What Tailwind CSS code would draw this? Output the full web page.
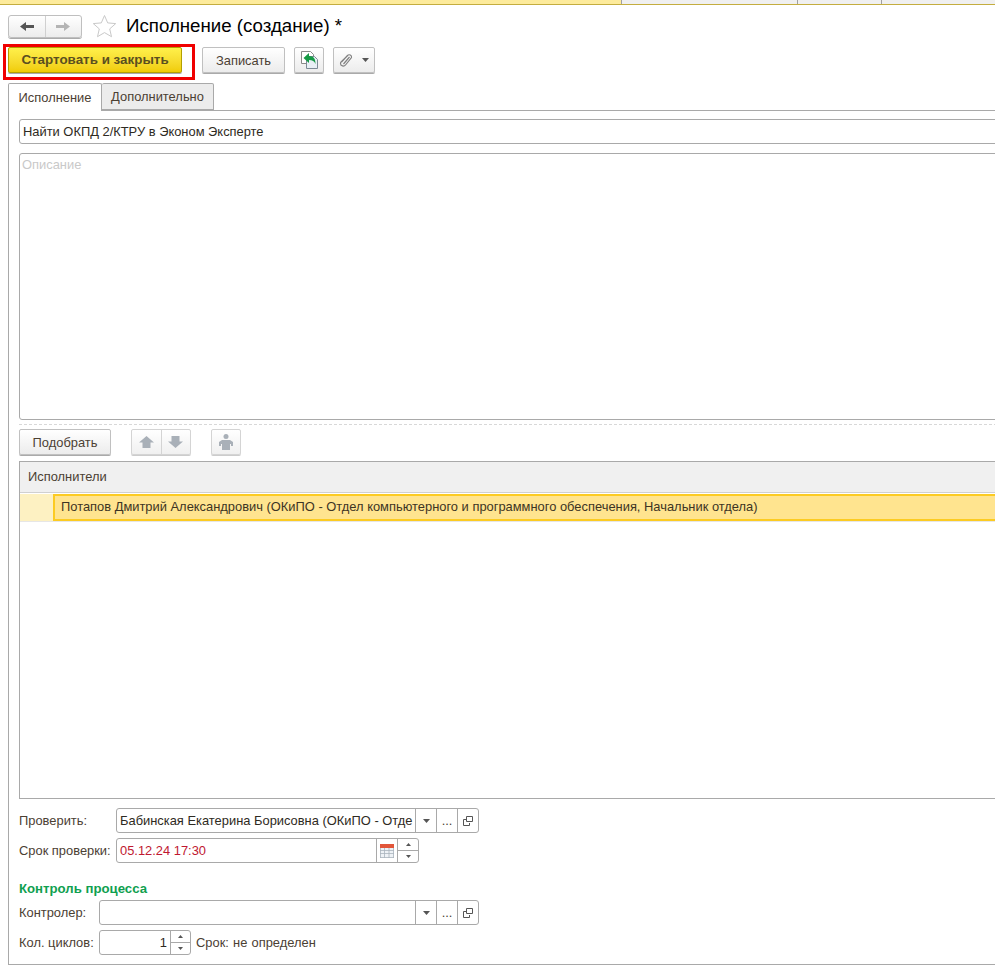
<!DOCTYPE html>
<html lang="ru">
<head>
  <meta charset="UTF-8" />
  <meta name="viewport" content="width=device-width, initial-scale=1" />
  <title>Исполнение (создание)</title>
  <script src="https://cdn.jsdelivr.net/npm/@tailwindcss/browser@4"></script>
</head>
<body class="bg-white font-['Liberation_Sans',Arial,sans-serif] text-[12.9px] text-[#4b4033]">
<div class="relative w-[995px] h-[970px] overflow-hidden">

  <!-- Top tabs strip -->
  <div class="flex h-[5px] border-b border-[#c4ad3f] bg-[#f0f0f0]">
    <div class="w-[622px] bg-[#fdeb9c] border-r border-[#a0a0a0]"></div>
    <div class="w-[176px] border-r border-[#a0a0a0]"></div>
    <div class="w-[84px] border-r border-[#a0a0a0]"></div>
  </div>

  <!-- Header -->
  <div class="flex items-center h-[24px] mt-[9px] ml-[8px]">
    <div class="flex w-[74px] h-[23px] border border-[#bfbfbf] rounded-[3px] bg-gradient-to-b from-white to-[#ececec] shadow-[0_1px_0_#aaa]">
      <div class="flex-1 flex items-center justify-center border-r border-[#d0d0d0]">
        <svg width="14" height="11" viewBox="0 0 14 11"><path d="M0 5.500 6 1v3h8v3H6v3z" fill="#555"/></svg>
      </div>
      <div class="flex-1 flex items-center justify-center">
        <svg width="14" height="11" viewBox="0 0 14 11"><path d="M14 5.500 8 1v3H0v3h8v3z" fill="#b4b4b4"/></svg>
      </div>
    </div>
    <svg class="ml-[10px]" width="25" height="24" viewBox="0 0 25 24"><path d="M12.500 1.500l3.200 7.400 8 .7-6 5.300 1.800 7.800-7-4.100-7 4.100 1.800-7.800-6-5.300 8-.7z" fill="#fff" stroke="#c9c9c9"/></svg>
    <h1 class="ml-[9px] text-[18.7px] leading-[24px] text-black">Исполнение (создание) *</h1>
  </div>

  <!-- Command bar -->
  <div class="flex items-start mt-[9px] ml-[8px] h-[26px]">
    <button class="w-[174px] h-[26px] pt-px rounded-[2px] border border-[#b3a000] bg-gradient-to-b from-[#fff04a] to-[#f0cc00] font-bold text-[13.4px] text-[#5a4f20] shadow-[0_1px_0_#aaa]">Стартовать и закрыть</button>
    <button class="ml-[20px] w-[83px] h-[26px] pt-px rounded-[2px] border border-[#c0c0c0] bg-gradient-to-b from-white to-[#ececec] text-[#4b4033] shadow-[0_1px_0_#aaa]">Записать</button>
    <button class="ml-[9px] w-[30px] h-[26px] rounded-[2px] border border-[#c0c0c0] bg-gradient-to-b from-white to-[#ececec] shadow-[0_1px_0_#aaa] flex items-center justify-center">
      <svg width="17" height="18" viewBox="0 0 17 18"><path d="M.5.500h9l3 3v9H.5z" fill="#fff" stroke="#8a8a8a"/><path d="M5.500 5.500h8l3 3v9h-11z" fill="#e8eff5" stroke="#7d8a96"/><path d="M2.500 7 8 2v3c5 0 6.500 3 6.500 8-1-2.500-3-4-6.500-4v3z" fill="#169a45"/></svg>
    </button>
    <button class="ml-[9px] w-[42px] h-[26px] rounded-[2px] border border-[#c0c0c0] bg-gradient-to-b from-white to-[#ececec] shadow-[0_1px_0_#aaa] flex items-center justify-center gap-[8px]">
      <svg width="15" height="15" viewBox="0 0 15 15" fill="none" stroke="#808080" stroke-width="1.200"><path d="M2.500 9 8.500 2.500c1.500-1.600 4.500-.3 4 2L6.500 12c-1.500 1.800-5 1.200-5-1.500 0-.7.300-1.200.8-1.800L8.500 2.800"/><path d="M4.500 11 10.500 4"/></svg>
      <svg width="7" height="4" viewBox="0 0 7 4"><path d="M0 0h7L3.500 4z" fill="#555"/></svg>
    </button>
  </div>

  <!-- Form tabs -->
  <div class="flex mt-[10px] ml-[8px] h-[27px] relative z-10">
    <div class="w-[94px] h-[28px] pt-px border border-b-0 border-[#a9a9a9] rounded-t-[2px] bg-white flex items-center justify-center">Исполнение</div>
    <div class="w-[112px] h-[27px] pt-px border border-l-0 border-[#a9a9a9] rounded-t-[2px] bg-[#ececec] flex items-center justify-center">Дополнительно</div>
  </div>

  <!-- Tab panel -->
  <div class="ml-[8px] w-[1100px] h-[855px] border border-[#a9a9a9] pt-[8px] pl-[10px]">
    <div class="w-[1000px] h-[25px] border border-[#a9a9a9] rounded-[3px] pl-[3px] leading-[23px] text-[#2e2a22]">Найти ОКПД 2/КТРУ в Эконом Эксперте</div>
    <div class="w-[1000px] h-[267px] mt-[9px] border border-[#a9a9a9] rounded-[3px] pl-[2px] pt-px text-[#c9c9c9]">Описание</div>

    <div class="mt-[4px] border-t border-dashed border-[#d8d8d8]"></div>

    <!-- Table toolbar -->
    <div class="flex items-start mt-[4px] h-[26px]">
      <button class="w-[92px] h-[26px] pt-px rounded-[2px] border border-[#c0c0c0] bg-gradient-to-b from-white to-[#ececec] shadow-[0_1px_0_#aaa]">Подобрать</button>
      <div class="flex ml-[20px] w-[60px] h-[26px] rounded-[2px] border border-[#d4d4d4] bg-gradient-to-b from-white to-[#f0f0f0] shadow-[0_1px_0_#ccc]">
        <div class="flex-1 flex items-center justify-center border-r border-[#d4d4d4]">
          <svg width="15" height="12" viewBox="0 0 15 12"><path d="M7.500 0 15 6.500h-3.500V12h-8V6.500H0z" fill="#a9b0b8"/></svg>
        </div>
        <div class="flex-1 flex items-center justify-center">
          <svg width="15" height="12" viewBox="0 0 15 12"><path d="M7.500 12 15 5.500h-3.500V0h-8v5.500H0z" fill="#a9b0b8"/></svg>
        </div>
      </div>
      <div class="flex items-center justify-center ml-[20px] w-[30px] h-[26px] rounded-[2px] border border-[#d4d4d4] bg-gradient-to-b from-white to-[#f0f0f0] shadow-[0_1px_0_#ccc]">
        <svg width="14" height="16" viewBox="0 0 14 16" fill="#a9b0b8"><circle cx="7" cy="2.500" r="2.500"/><path d="M3 6h8l3 2v4h-2v-2h-1v6H3v-6H2v2H0V8z"/></svg>
      </div>
    </div>

    <!-- Executors table -->
    <div class="w-[1000px] h-[338px] mt-[6px] border border-[#a9a9a9]">
      <div class="h-[31px] bg-[#f0f0f0] border-b border-[#d0d0d0] pl-[8px] leading-[30px]">Исполнители</div>
      <div class="flex h-[28px] mt-px border-b border-[#e6e6e6]">
        <div class="w-[33px] bg-[#fdf1c2]"></div>
        <div class="flex-1 bg-[#ffe48f] border-y-2 border-l-2 border-[#fccb22] pl-[6px] leading-[22px] text-[#3d3424]">Потапов Дмитрий Александрович (ОКиПО - Отдел компьютерного и программного обеспечения, Начальник отдела)</div>
      </div>
    </div>

    <!-- Check fields -->
    <div class="flex items-center mt-[9px] h-[25px]">
      <span class="w-[97px]">Проверить:</span>
      <div class="flex w-[363px] h-[25px] border border-[#a9a9a9] rounded-[3px]">
        <div class="w-[298px] pl-[3px] leading-[23px] text-[#2e2a22] whitespace-nowrap">Бабинская Екатерина Борисовна (ОКиПО - Отде</div>
        <div class="w-[21px] border-l border-[#a9a9a9] flex items-center justify-center"><svg width="7" height="4" viewBox="0 0 7 4"><path d="M0 0h7L3.500 4z" fill="#555"/></svg></div>
        <div class="w-[21px] border-l border-[#a9a9a9] text-center leading-[24px]">...</div>
        <div class="w-[21px] border-l border-[#a9a9a9] flex items-center justify-center"><svg width="10" height="10" viewBox="0 0 10 10" fill="none" stroke="#555"><path d="M3.500.5h6v5h-6z"/><path d="M3 3.500H.5v6h6V7"/></svg></div>
      </div>
    </div>
    <div class="flex items-center mt-[5px] h-[25px]">
      <span class="w-[97px] whitespace-nowrap">Срок проверки:</span>
      <div class="flex w-[303px] h-[25px] border border-[#a9a9a9] rounded-[3px]">
        <div class="w-[259px] pl-[3px] leading-[23px] text-[#c01830]">05.12.24 17:30</div>
        <div class="w-[21px] border-l border-[#a9a9a9] flex items-center justify-center">
          <svg width="14" height="14" viewBox="0 0 14 14"><rect y="3" width="14" height="11" fill="#eef2f6"/><path d="M0 0h14v4H0z" fill="#e2563a"/><path d="M0 6.500h14M0 9.500h14M0 13.500h14M.5 4v10M4.500 4v10M9 4v10M13.500 4v10" stroke="#aab4be" stroke-width=".8"/></svg>
        </div>
        <div class="w-[21px] border-l border-[#a9a9a9] flex flex-col">
          <div class="flex-1 flex items-center justify-center border-b border-[#a9a9a9]"><svg width="5" height="3" viewBox="0 0 5 3"><path d="M0 3h5L2.500 0z" fill="#555"/></svg></div>
          <div class="flex-1 flex items-center justify-center"><svg width="5" height="3" viewBox="0 0 5 3"><path d="M0 0h5L2.500 3z" fill="#555"/></svg></div>
        </div>
      </div>
    </div>

    <!-- Process control -->
    <div class="mt-[19px] font-bold text-[13.2px] text-[#10a050] leading-[14px]">Контроль процесса</div>
    <div class="flex items-center mt-[4px] h-[25px]">
      <span class="w-[80px]">Контролер:</span>
      <div class="flex w-[380px] h-[25px] border border-[#a9a9a9] rounded-[3px]">
        <div class="w-[315px]"></div>
        <div class="w-[21px] border-l border-[#a9a9a9] flex items-center justify-center"><svg width="7" height="4" viewBox="0 0 7 4"><path d="M0 0h7L3.500 4z" fill="#555"/></svg></div>
        <div class="w-[21px] border-l border-[#a9a9a9] text-center leading-[24px]">...</div>
        <div class="w-[21px] border-l border-[#a9a9a9] flex items-center justify-center"><svg width="10" height="10" viewBox="0 0 10 10" fill="none" stroke="#555"><path d="M3.500.5h6v5h-6z"/><path d="M3 3.500H.5v6h6V7"/></svg></div>
      </div>
    </div>
    <div class="flex items-center mt-[5px] h-[25px]">
      <span class="w-[80px]">Кол. циклов:</span>
      <div class="flex w-[92px] h-[25px] border border-[#a9a9a9] rounded-[3px]">
        <div class="w-[70px] text-right pr-[3px] leading-[23px] text-[#2e2a22]">1</div>
        <div class="w-[20px] border-l border-[#a9a9a9] flex flex-col">
          <div class="flex-1 flex items-center justify-center border-b border-[#a9a9a9]"><svg width="5" height="3" viewBox="0 0 5 3"><path d="M0 3h5L2.500 0z" fill="#555"/></svg></div>
          <div class="flex-1 flex items-center justify-center"><svg width="5" height="3" viewBox="0 0 5 3"><path d="M0 0h5L2.500 3z" fill="#555"/></svg></div>
        </div>
      </div>
      <span class="ml-[5px] [word-spacing:.6px]">Срок: не определен</span>
    </div>
  </div>

  <!-- Red annotation around the main button -->
  <div class="absolute left-[3px] top-[44px] w-[192px] h-[36px] border-[3px] border-[#f00000]"></div>
</div>
</body>
</html>
